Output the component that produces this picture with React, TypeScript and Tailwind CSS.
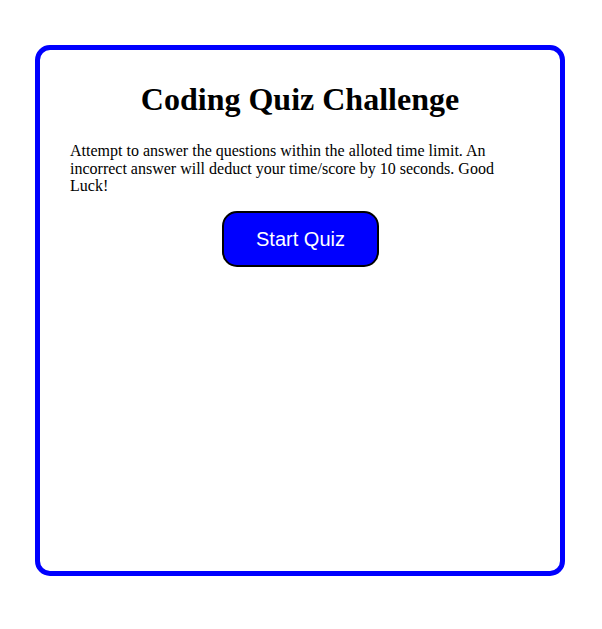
export default function App() {
  return (
    <div className="min-h-screen bg-white pt-[45px]">
      {/* ── Quiz card ─────────────────────────── */}
      <main className="ml-[35px] box-border h-[531px] w-[530px] rounded-[15px] border-[5px] border-[#0000ff] px-[30px] pt-[10px] font-['Liberation_Serif',serif] text-black">
        <h1 className="mt-[21px] mb-[24px] text-center text-[32px] leading-[37px] font-bold">
          Coding Quiz Challenge
        </h1>
        <p className="mb-[16px] text-base leading-[17.5px]">
          Attempt to answer the questions within the alloted time limit. An incorrect answer will
          deduct your time/score by 10 seconds. Good Luck!
        </p>
        <div className="flex justify-center">
          <button
            type="button"
            className="ml-[1px] box-border h-[56px] w-[157px] rounded-[15px] border-2 border-black bg-[#0000ff] font-['Liberation_Sans',Arial,sans-serif] text-[20px] text-white"
          >
            Start Quiz
          </button>
        </div>
      </main>
    </div>
  );
}
